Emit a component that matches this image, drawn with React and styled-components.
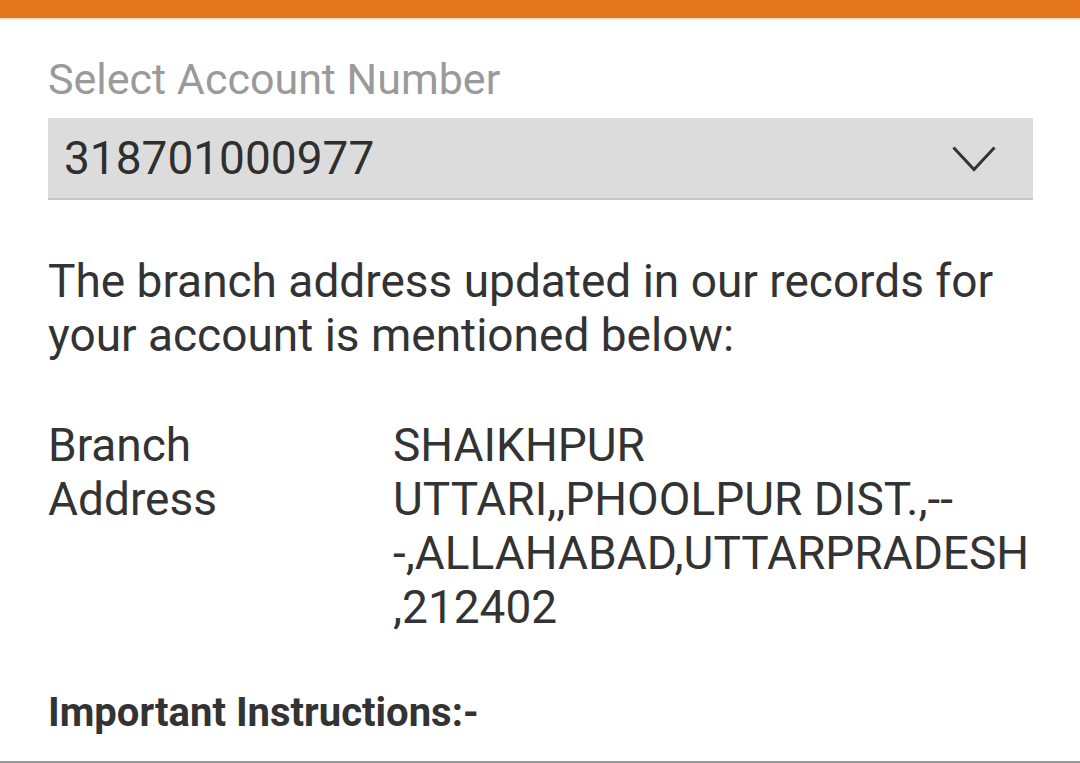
import React from "react";
import styled, { createGlobalStyle } from "styled-components";

const Global = createGlobalStyle`
  html, body { margin: 0; padding: 0; background: #fff; }
  body { font-family: Roboto, "Noto Sans", sans-serif; color: #333; }
`;

const Page = styled.div`
  width: 1080px;
  height: 763px;
  overflow: hidden;
  display: flex;
  flex-direction: column;
  background: #fff;
  position: relative;
`;

const TopBar = styled.div`
  height: 18px;
  background: #e5761b;
  box-shadow: 0 1px 2px rgba(229, 118, 27, 0.35);
  flex: none;
`;

const Content = styled.div`
  padding: 40px 47px 0 48px;
  display: flex;
  flex-direction: column;
`;

const FieldLabel = styled.div`
  font-size: 43px;
  line-height: 42px;
  color: #9a9a9a;
`;

const Select = styled.div`
  margin-top: 18px;
  height: 80px;
  background: #dcdcdc;
  border-bottom: 2px solid #c8c8c8;
  display: flex;
  align-items: center;
  justify-content: space-between;
  padding: 0 37px 0 16px;
  font-size: 46px;
  color: #2f2f2f;
`;

const Chevron = styled.svg`
  flex: none;
  margin-top: 2px;
`;

const Paragraph = styled.p`
  margin: 54px 0 0;
  font-size: 46px;
  line-height: 54px;
  color: #333;
`;

const AddressRow = styled.div`
  margin-top: 56px;
  display: grid;
  grid-template-columns: 345px 1fr;
  font-size: 46px;
  line-height: 54px;
  color: #333;
`;

const Label = styled.div``;
const Value = styled.div`
  word-break: break-all;
`;

const Heading = styled.div`
  margin-top: 57px;
  font-size: 40px;
  font-weight: 700;
  color: #333;
  line-height: 44px;
`;

const BottomLine = styled.div`
  position: absolute;
  left: 0;
  right: 0;
  bottom: 0;
  height: 2px;
  background: #9a9a9a;
`;

export default function App() {
  return (
    <Page>
      <Global />
      <TopBar />
      <Content>
        <FieldLabel>Select Account Number</FieldLabel>
        <Select>
          <span>318701000977</span>
          <Chevron width="44" height="26" viewBox="0 0 44 26">
            <polyline points="1.5,1.5 22,23.5 42.5,1.5" fill="none" stroke="#333" strokeWidth="3" />
          </Chevron>
        </Select>
        <Paragraph>
          The branch address updated in our records for your account is mentioned below:
        </Paragraph>
        <AddressRow>
          <Label>Branch<br />Address</Label>
          <Value>SHAIKHPUR<br />UTTARI,,PHOOLPUR DIST.,--<br />-,ALLAHABAD,UTTARPRADESH<br />,212402</Value>
        </AddressRow>
        <Heading>Important Instructions:-</Heading>
      </Content>
      <BottomLine />
    </Page>
  );
}
